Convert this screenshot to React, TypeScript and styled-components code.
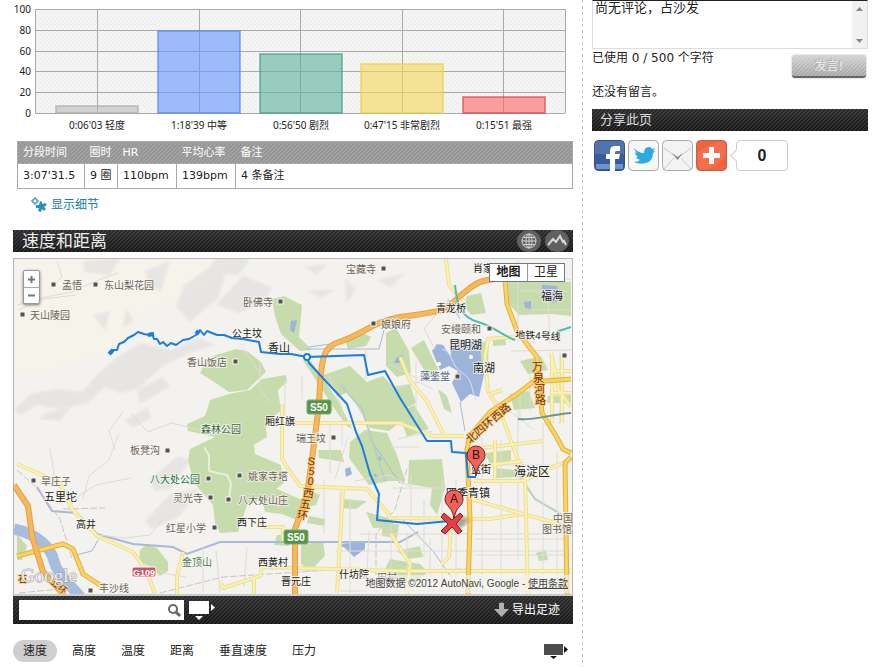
import React from "react";
import styled, { createGlobalStyle, css } from "styled-components";

const sans = `"Noto Sans", "Noto Sans CJK SC", sans-serif`;
const wide = `"DejaVu Sans", "Noto Sans CJK SC", sans-serif`;
const arial = `"Liberation Sans", "Noto Sans CJK SC", sans-serif`;

const stripes = (light: string) =>
  `linear-gradient(135deg, transparent 25%, ${light} 25% 50%, transparent 50% 75%, ${light} 75%) 0 0 / 4px 4px`;

const darkStripes = css`
  background: ${stripes("rgba(255, 255, 255, 0.09)")}, linear-gradient(#2c2c2c, #171717);
`;

const GlobalStyle = createGlobalStyle`
  * { box-sizing: border-box; }
  body { margin: 0; background: #fff; color: #333; font: 12px ${wide}; }
  button, input, textarea { font-family: inherit; }
`;

const Page = styled.div`
  display: grid;
  grid-template-columns: minmax(0, 1fr) 303px;
  min-height: 100vh;
`;
const Main = styled.main`
  padding: 0 10px 2px 13px;
  background: repeating-linear-gradient(#c8c8c8 0 3px, transparent 3px 6px) right / 1px 100% no-repeat;
`;
const Sidebar = styled.aside`
  padding: 0 18px 0 9px;
`;

const Chart = styled.svg`
  display: block;
  width: 100%;
  height: auto;
  font-family: ${sans};
  font-size: 10px;
  fill: #222;
`;

const SummaryTable = styled.table`
  width: calc(100% - 4px);
  margin: 5px 0 0 4px;
  border-collapse: collapse;
  border: 1px solid #a8a8a8;
  th {
    height: 22px;
    padding: 0 5px;
    text-align: left;
    font-size: 11px;
    font-weight: 400;
    line-height: 20px;
    color: #fff;
  }
  thead {
    background: ${stripes("rgba(255, 255, 255, 0.12)")}, #959595;
  }
  td {
    height: 25px;
    padding: 0 5px;
    border: 1px solid #a8a8a8;
    font-size: 11px;
    line-height: 16px;
    color: #222;
    white-space: nowrap;
  }
`;
const Col = styled.col<{ $width?: number }>`
  ${(p) => p.$width && `width: ${p.$width}px;`}
`;

const DetailLink = styled.a`
  display: flex;
  align-items: center;
  gap: 4px;
  width: max-content;
  margin: 7px 0 0 18px;
  height: 18px;
  line-height: 18px;
  color: #14809f;
  text-decoration: none;
`;

const PanelHeader = styled.header`
  ${darkStripes}
  display: flex;
  align-items: center;
  justify-content: space-between;
  height: 22px;
  margin-top: 16px;
  padding: 0 4px 0 9px;
`;
const PanelTitle = styled.h2`
  margin: 0;
  font-size: 17px;
  font-weight: 400;
  line-height: 20px;
  color: #eee;
`;
const RoundButtons = styled.div`
  display: flex;
  gap: 4px;
`;
const RoundButton = styled.button`
  display: grid;
  place-items: center;
  width: 24px;
  height: 22px;
  padding: 0;
  border: 0;
  border-radius: 50%;
  background: #606060;
`;

const MapFrame = styled.div`
  position: relative;
  margin-top: 6px;
  border: 1px solid #b5b5b5;
  border-bottom: 2px solid #ccc;
  overflow: hidden;
`;
const MapDrawing = styled.svg`
  display: block;
  width: 100%;
  height: auto;
  background: #f4f2ee;
  font-family: ${arial};
`;
const ZoomControl = styled.div`
  position: absolute;
  left: 9px;
  top: 11px;
  display: flex;
  flex-direction: column;
  width: 17px;
  border: 1px solid #999;
  border-radius: 2px;
  background: #fff;
  box-shadow: 0 1px 3px #777;
`;
const ZoomButton = styled.button`
  display: grid;
  place-items: center;
  height: 16px;
  padding: 0;
  border: 0;
  background: none;
  & + & { border-top: 1px solid #aaa; }
`;
const MapTypes = styled.div`
  position: absolute;
  right: 7px;
  top: 4px;
  display: flex;
  border: 1px solid #717b87;
  background: #fff;
`;
const MapType = styled.button<{ $active?: boolean }>`
  width: 37px;
  height: 17px;
  padding: 0;
  border: 0;
  background: none;
  font-size: 12px;
  line-height: 17px;
  color: #222;
  font-weight: ${(p) => (p.$active ? 700 : 400)};
  & + & { border-left: 1px solid #999; }
`;
const Attribution = styled.p`
  position: absolute;
  right: 0;
  bottom: 1px;
  margin: 0;
  padding: 0 4px;
  background: rgba(245, 243, 240, 0.65);
  font: 10px/18px ${arial};
  color: #444;
  a { color: #444; }
`;

const MapBar = styled.div`
  ${darkStripes}
  display: flex;
  align-items: center;
  height: 28px;
  padding: 0 13px 0 6px;
`;
const SearchBox = styled.label`
  display: flex;
  align-items: center;
  width: 165px;
  height: 20px;
  padding-right: 2px;
  background: #fff;
`;
const SearchInput = styled.input`
  flex: 1;
  min-width: 0;
  border: 0;
  outline: 0;
  padding: 0 4px;
  background: none;
  font-size: 12px;
`;
const IconButton = styled.button`
  display: block;
  padding: 0;
  border: 0;
  background: none;
  margin-left: 5px;
  svg { display: block; }
`;
const ExportButton = styled.button`
  display: flex;
  align-items: center;
  gap: 3px;
  margin-left: auto;
  padding: 0;
  border: 0;
  background: none;
  font-size: 12px;
  line-height: 20px;
  color: #fff;
`;

const Tabs = styled.nav`
  display: flex;
  align-items: center;
  gap: 5px;
  margin-top: 16px;
  padding-right: 5px;
`;
const Tab = styled.button<{ $active?: boolean }>`
  height: 22px;
  padding: 0 10px;
  border: 0;
  border-radius: 11px;
  background: ${(p) => (p.$active ? "#cfcfcf" : "none")};
  font-size: 12px;
  line-height: 22px;
  color: #222;
`;
const TabsEnd = styled.div`
  margin-left: auto;
`;

const CommentBox = styled.div`
  display: flex;
  height: 49px;
  border: 1px solid #ddd;
  border-top-color: #222;
`;
const CommentInput = styled.textarea`
  flex: 1;
  min-width: 0;
  padding: 0 2px;
  border: 0;
  outline: 0;
  resize: none;
  overflow: hidden;
  font-size: 13px;
  line-height: 14px;
  color: #222;
`;
const ScrollTrack = styled.div`
  display: flex;
  flex-direction: column;
  justify-content: space-between;
  align-items: center;
  width: 15px;
  padding: 6px 0 5px;
  background: #f1f1f1;
`;
const CommentActions = styled.div`
  display: flex;
  justify-content: space-between;
  padding-right: 2px;
`;
const Note = styled.p`
  margin: 0;
  font-size: 12px;
  line-height: 18px;
  color: #222;
`;
const SubmitButton = styled.button`
  width: 74px;
  height: 23px;
  margin-top: 6px;
  padding: 0;
  border: 0;
  border-bottom: 2px solid #666;
  border-radius: 3px;
  background: ${stripes("rgba(255, 255, 255, 0.18)")}, linear-gradient(#d2d2d2, #a4a4a4);
  box-shadow: 0 0 2px #aaa;
  font-size: 12px;
  line-height: 20px;
  color: #eee;
  text-shadow: -1px -1px #aaa;
`;
const EmptyNote = styled(Note)`
  margin-top: 5px;
`;
const ShareTitle = styled.h2`
  ${darkStripes}
  margin: 8px 0 0;
  padding-left: 8px;
  font-size: 13px;
  font-weight: 400;
  line-height: 22px;
  color: #ddd;
`;
const ShareRow = styled.div`
  display: flex;
  align-items: center;
  gap: 3px;
  margin: 9px 0 0 2px;
`;
const ShareLink = styled.a`
  width: 31px;
  height: 31px;
  svg { display: block; }
`;
const ShareCount = styled.output`
  position: relative;
  width: 52px;
  height: 31px;
  margin-left: 6px;
  border: 1px solid #ccc;
  border-radius: 4px;
  font: 700 16px/29px ${arial};
  text-align: center;
  color: #222;
  &::before {
    content: "";
    position: absolute;
    left: -5px;
    top: 10px;
    width: 8px;
    height: 8px;
    border: solid #ccc;
    border-width: 0 0 1px 1px;
    background: #fff;
    transform: rotate(45deg);
  }
`;

const bars = [
  { x: 97, top: 106, color: "#bdbdbd", edge: "#a8a8a8", label: "0:06'03 轻度" },
  { x: 199, top: 31, color: "#6495ff", edge: "#4f82ee", label: "1:18'39 中等" },
  { x: 301, top: 54, color: "#5ab39c", edge: "#3d9880", label: "0:56'50 剧烈" },
  { x: 402, top: 64, color: "#f6d956", edge: "#ebcd42", label: "0:47'15 非常剧烈" },
  { x: 504, top: 97, color: "#ff6464", edge: "#e33b40", label: "0:15'51 最强" },
];

function ZoneChart() {
  return (
    <Chart viewBox="13 0 560 136" role="img" aria-label="心率区间">
      <defs>
        <pattern id="hatch" width="4" height="4" patternUnits="userSpaceOnUse">
          <rect width="4" height="4" fill="#f5f5f5" />
          <path d="M-1 1L1-1M0 4L4 0M3 5L5 3" stroke="#ebebeb" />
        </pattern>
      </defs>
      <rect x="35" y="9" width="530" height="104" fill="url(#hatch)" />
      {[0, 20, 40, 60, 80, 100].map((v) => {
        const y = Math.round(113 - v * 1.04);
        return (
          <g key={v}>
            <path d={`M35 ${y + 0.5}H565`} stroke="#aaa" />
            <text x="31" y={y + 4} textAnchor="end">{v}</text>
          </g>
        );
      })}
      {[35, 97, 199, 300, 402, 503, 565].map((x) => (
        <path key={x} d={`M${x + 0.5} 9V113`} stroke="#aaa" />
      ))}
      {bars.map((b) => (
        <g key={b.label}>
          <rect x={b.x - 41} y={b.top} width="82" height={113 - b.top} fill={b.color} fillOpacity="0.6" stroke={b.edge} strokeOpacity="0.55" strokeWidth="2" />
          <text x={b.x} y="129" textAnchor="middle">{b.label}</text>
        </g>
      ))}
    </Chart>
  );
}

type Label = [string, number, number, number?, string?];
const brown = "#6c6259";
const labels: Label[] = [
  ["孟悟", 62, 290, 10, brown], ["东山梨花园", 104, 290, 10, brown], ["天山陵园", 30, 320, 10, brown],
  ["宝藏寺", 346, 274, 10, brown], ["卧佛寺", 243, 307, 10, brown], ["娘娘府", 381, 329, 10, brown],
  ["公主坟", 232, 338], ["香山", 268, 353, 11], ["香山饭店", 187, 367, 10, brown],
  ["森林公园", 201, 434, 10, "#36683b"], ["厢红旗", 265, 426], ["瑞王坟", 296, 443, 10, brown],
  ["板凳沟", 130, 455, 10, brown], ["旱庄子", 41, 486, 10, brown], ["五里坨", 44, 502, 11],
  ["八大处公园", 150, 484, 10, "#26724b"], ["灵光寺", 173, 503, 10, brown], ["姚家寺塔", 248, 481, 10, brown],
  ["八大处山庄", 238, 505, 10, brown], ["西下庄", 237, 527], ["高井", 76, 529], ["红星小学", 166, 533, 10, brown],
  ["金顶山", 182, 567, 10, "#4a7b53"], ["西黄村", 258, 567], ["晋元庄", 281, 586], ["什坊院", 339, 579],
  ["田村", 377, 582, 10, brown], ["丰沙线", 99, 593, 10, brown], ["肖家河", 473, 273], ["福海", 541, 301, 11],
  ["青龙桥", 436, 313], ["安缦颐和", 441, 334, 10, brown], ["昆明湖", 449, 350, 11], ["南湖", 473, 373, 11],
  ["藻鉴堂", 420, 381, 10, "#526587"], ["海淀区", 514, 477, 12], ["四季青镇", 446, 498, 11],
  ["蓝街", 471, 474], ["中国", 553, 523, 10, brown], ["图书馆", 542, 534, 10, brown],
];
const dots = [[54, 286], [96, 286], [23, 316], [384, 270], [281, 303], [374, 325], [236, 363], [334, 439], [168, 452], [34, 482], [209, 480], [240, 477], [211, 499], [229, 501], [215, 529], [490, 330], [565, 357], [458, 378], [91, 592]];

const forests = [
  "M236 350L247 352L261 363L266 373L247 391L229 393L208 379L200 374L204 366L213 357Z",
  "M210 401L229 395L250 391L262 380L286 376L287 383L278 391L281 412L265 423L267 438L254 446L255 455L281 466L284 484L263 500L247 506L238 533L220 534L215 524L213 506L194 484L188 461L190 450L215 438L188 432L187 425L205 417Z",
  "M252 493L277 490L302 501L304 516L297 521L282 515L265 513L263 505Z",
  "M272 300L284 297L302 306L299 338L312 351L300 352L281 335L275 317Z",
  "M140 551L147 545L157 549L168 563L168 572L160 577L149 567L139 563Z M17 535L27 547L22 561L17 561Z",
  "M303 361L311 362L339 403L352 430L346 426L334 409Z",
  "M345 340L358 331L371 338L366 347L348 350Z M386 334L396 329L409 352L411 374L397 378L386 367Z",
  "M323 376L350 367L367 383L383 377L403 399L407 418L389 432L370 429L349 393L339 397Z",
  "M391 388L410 385L416 404L405 410L393 404Z M399 414L414 406L429 430L407 438Z",
  "M411 349L424 341L438 370L434 380L424 371Z M438 390L447 397L452 414L444 410Z",
  "M467 297L481 294L486 314L471 316L464 307Z M508 283L571 283L571 317L551 315L519 316L509 305Z",
  "M510 395L529 392L535 409L514 411Z M548 397L571 396L571 404L547 404Z M478 345L489 341L488 365L479 368Z",
  "M409 461L442 460L445 489L437 516L430 506L432 489L408 485Z",
  "M350 443L365 431L387 434L397 456L405 482L389 482L369 486L349 459Z M318 451L341 451L344 463L319 459Z",
  "M303 487L320 496L316 506L304 509Z M301 546L323 542L325 557L309 573L301 564Z",
  "M309 517L325 520L325 527L307 524Z M316 403L330 400L333 411L319 414Z",
  "M385 570L390 560L420 565L428 573L415 583L389 577Z M397 552L420 547L423 558L407 560Z",
  "M485 454L511 451L511 463L491 467Z M493 469L515 471L519 478L495 479Z M536 554L546 551L548 561L539 562Z",
  "M520 362L541 357L548 371L528 375Z M493 338L505 337L506 346L493 347Z M366 513L392 520L394 528L373 529Z",
  "M277 536L291 536L289 547L274 546Z M341 500L367 502L356 510L340 509Z M382 526L399 525L397 539L382 537Z",
];
const minorRoads = [
  "M57 262L62 278L50 290M17 306L45 298L72 293L96 282L118 274M18 311L43 300L76 296M50 450L56 486L74 500L96 486L131 479M83 500L89 477L109 461L119 434M115 451L109 432L123 413M131 415L148 433L172 424L199 431",
  "M163 520L150 536L125 539L98 536M203 548V594M216 552L220 594M247 548L244 588M161 574L186 578M242 348L260 374M260 363V389L270 404",
  "M285 380V420M302 376V400M329 376L342 409V447M330 424V474M348 438L335 480M366 350V380M391 366L418 380M355 482L390 476L411 488M324 480V535M340 494V570M350 500V594M369 532L366 594M391 520V592M407 534V572M430 539V592M336 552H570M341 592H570M360 535H570",
  "M393 390L419 383L433 390M416 363V431M398 440L432 432M390 448H419M392 489H450M411 475V526M424 501V559M442 480V594M456 481V594M482 439V594M501 441V594M543 424V582M557 454V594M475 466H568M474 540H566M475 556H571M485 580H571M518 409V562M511 352L571 351M520 394V421M530 371V413M490 397L533 430M551 355V427M560 352V425M511 275L531 269L571 281M518 261V343M548 298L550 345M522 292H571M531 311H571M448 301L424 330L435 350",
];
const majorRoads = [
  "M446 260L449 286L464 302M17 465L40 475L60 485L72 510L97 537L133 553L147 573L155 595M183 553L177 577V595",
  "M282 405V460L300 487L367 490L387 513L390 519L490 520L523 515L571 528M343 490L337 594M293 424H400L433 437H464",
  "M220 582L223 589L260 577L262 568L400 572H571M263 528H283V542M254 579V595",
  "M515 338L488 340L485 358L488 392L500 412L515 453L525 477L528 595M474 482H523L571 460M473 450L543 442M471 500L523 515",
  "M400 358L410 382L427 402L444 436M551 354L559 392L571 408M488 396L502 391M551 372H571M551 394H571M562 356V424M552 355V424",
  "M479 467L523 462M495 441V480M451 525L449 558L442 565M391 535L410 565L407 595",
];
const ringRoads = "M571 380L533 383L517 395L490 413L470 437L467 450L470 520L468 596M505 280L507 305L517 332L537 358L542 414L556 437L563 450L571 454M571 458L565 464L567 596M17 557L63 545L73 550L83 575L103 588";
const highways = "M510 279C475 280 475 286 461 296C443 314 443 312 400 318C368 325 367 333 342 342C322 348 321 358 319 405L315 437L307 497L295 530V595M14 486L28 507L32 537L43 573L64 596";

const vertical = [["S", 311, 466], ["5", 311, 476], ["0", 310, 486], ["西", 308, 498], ["五", 305, 509], ["环", 302, 520]] as const;

function Shield({ x, y, text, red }: { x: number; y: number; text: string; red?: boolean }) {
  return (
    <g>
      <rect x={x} y={y} width="24" height={red ? 10 : 14} rx="2" fill={red ? "#cc5369" : "#56944b"} stroke={red ? "#fff" : "#78ac69"} />
      <text x={x + 12} y={y + (red ? 9 : 11)} textAnchor="middle" fontSize={red ? 9 : 10} fontWeight="700" fill="#fff">{text}</text>
    </g>
  );
}

function Pin({ x, y, letter }: { x: number; y: number; letter: string }) {
  return (
    <g>
      <path d={`M${x} ${y}C${x - 1} ${y - 14} ${x - 9} ${y - 13} ${x - 9} ${y - 21}A9 9 0 0 1 ${x + 9} ${y - 21}C${x + 9} ${y - 13} ${x + 1} ${y - 14} ${x} ${y}Z`} fill="#f36159" stroke="#6b2521" />
      <text x={x} y={y - 17} textAnchor="middle" fontSize="12" fill="#26110f">{letter}</text>
    </g>
  );
}

function TrackMap() {
  return (
    <MapDrawing viewBox="14 260 558 335" role="img" aria-label="路线地图">
      <defs>
        <filter id="soft"><feGaussianBlur stdDeviation="2" /></filter>
        <filter id="slight"><feGaussianBlur stdDeviation="1" /></filter>
      </defs>
      <path d="M14 259H230L205 285L150 310L110 350L70 365L14 380Z" fill="#f6f3ea" filter="url(#soft)" />
      <g fill="#dededd" opacity=".6" filter="url(#slight)">
        <path d="M14 410L32 394L58 390L82 393L97 376L117 358L141 344L171 351L199 339L215 346L190 354L164 366L138 390L120 394L105 388L88 404L59 410L37 406L20 417Z" />
        <path d="M83 262L121 259L110 276L84 273ZM145 272L170 262L161 292L149 286ZM184 286L211 267L220 250L250 261L238 277L226 274L218 299L190 323L176 308ZM243 276L272 289L263 304L239 314L216 306Z" />
        <path d="M137 391L163 378L170 388L140 405ZM48 413L71 408L60 422L38 420ZM126 309L134 322L123 329ZM93 316L110 312L105 332Z" />
        <path d="M304 268L328 265L317 276ZM345 279L356 291L346 305ZM307 292L336 290L321 299ZM377 281L405 274L390 289ZM125 421L148 408L151 419L133 429ZM150 480L178 457L190 461L171 490L155 492ZM145 522L171 494L199 490L179 518L151 530Z" />
      </g>
      <g fill="#c7dcad">{forests.map((d) => <path key={d} d={d} />)}</g>
      <path d="M204 448L209 456L209 472L227 476L231 484L229 499" fill="none" stroke="#e8efd9" strokeWidth="2" />
      <g fill="#9db3da">
        <path d="M432 352L437 345L443 346L451 358L450 344L458 340L480 341L481 360L484 376L479 398L470 395L461 403L452 384L458 372L449 367L440 371Z" />
        <path d="M542 286L557 287L563 300L553 304L541 300ZM524 303L531 302L531 310L525 309ZM291 322L297 321L294 334L290 331ZM338 545L365 543L365 550L354 558L345 549ZM345 470L350 468L352 475L346 478ZM376 460L380 457L382 462ZM374 474L379 478L375 480ZM397 358L403 356L401 364L394 364Z" />
      </g>
      <g fill="#fff"><circle cx="439" cy="365" r="2" /><circle cx="471" cy="358" r="2" /></g>
      <path d="M442 350C454 353 450 366 461 373S470 384 476 402" fill="none" stroke="#d9e2ef" />
      <path d="M14 530C38 535 51 549 54 562S67 582 82 600" fill="none" stroke="#a6bde0" strokeWidth="11" />
      <g fill="none" stroke="#a9b8d6">
        <path d="M37 488L52 512L77 514L97 535L133 545L173 548L187 555L220 543H400L418 533" strokeWidth="2" />
        <path d="M98 541L92 552L76 556M309 348L330 345L353 335M307 350H379L384 331M370 440L400 484M448 300L460 320M460 403L465 432" />
        <path d="M402 520L433 552L454 582" />
        <path d="M519 476L535 500L571 521M340 385L362 410L385 482" stroke="#b6cec4" strokeWidth="2" />
      </g>
      <g fill="none" stroke="#dfdcd7" strokeWidth="1">{minorRoads.map((d) => <path key={d} d={d} />)}</g>
      <path d="M17 471L34 486L60 520L72 560M19 594L60 590M63 510L105 509M160 594L223 578L330 571L400 571L472 570M407 470L395 510L376 535V594" fill="none" stroke="#c8c6c4" strokeWidth="1" strokeDasharray="7 2" />
      {majorRoads.map((d) => (
        <g key={d} fill="none">
          <path d={d} stroke="#ebdf9f" strokeWidth="4" />
          <path d={d} stroke="#fcf2a8" strokeWidth="2" />
        </g>
      ))}
      <g fill="none" strokeLinejoin="round">
        <path d={ringRoads} stroke="#dfb04a" strokeWidth="5" />
        <path d={ringRoads} stroke="#fbd45c" strokeWidth="3" />
        <path d={highways} stroke="#dda34a" strokeWidth="6" />
        <path d={highways} stroke="#f9b759" strokeWidth="4" />
        <path d="M455 286C457 307 461 318 478 323C491 326 500 335 515 341M556 333L571 328" stroke="#4fbcae" strokeWidth="2" />
        <path d="M518 420C535 422 545 416 571 414" stroke="#66998f" strokeWidth="2" />
      </g>
      <g fill="#555150">{dots.map(([x, y]) => <rect key={`${x}-${y}`} x={x - 3} y={y - 3} width="5" height="5" stroke="#f5f4f0" />)}</g>
      <g stroke="#f7f6f1" strokeOpacity=".8" strokeWidth="2" paintOrder="stroke" strokeLinejoin="round">
        {labels.map(([text, x, y, size = 10, fill = "#202020"]) => (
          <text key={text} x={x} y={y} fontSize={size} fill={fill}>{text}</text>
        ))}
        <text x="515" y="339" fontSize="10" transform="rotate(3 515 339)" fill="#222">地铁4号线</text>
        <g stroke="#ffc76b" fill="#68340d" fontSize="11">
          {vertical.map(([c, x, y]) => <text key={c} x={x} y={y} textAnchor="middle" transform={`rotate(8 ${x} ${y})`}>{c}</text>)}
          {["万", "泉", "河", "路"].map((c, i) => <text key={c} x={532 + i} y={380 + i * 11} transform={`translate(0 -8)`}>{c}</text>)}
          <text x="470" y="445" transform="rotate(-41 470 445)">北四环西路</text>
          <text x="18" y="583" fontSize="9">石</text>
          <text x="50" y="584" fontSize="9" transform="rotate(40 50 584)">五环</text>
        </g>
      </g>
      <Shield x={307} y={401} text="S50" />
      <Shield x={284} y={531} text="S50" />
      <Shield x={132} y={568} text="G109" red />
      <text x="21" y="583" fontFamily="Liberation Serif, serif" fontSize="19" fill="#eee" stroke="#9a9a9a" strokeWidth="1" paintOrder="stroke">Google</text>
      <g fill="none" stroke="#1b7ddd" strokeWidth="2" strokeLinejoin="round">
        <path d="M111 355L113 351L117 351L119 345L124 343L128 339L134 336L138 333L144 335L149 336L152 334L154 340L157 340L160 345L163 343L167 347L171 344L176 346L183 341L189 340L196 336L200 331L204 336L207 332L217 336L224 336L232 339L243 340L259 343L261 353L280 355L291 355L307 358L364 356L368 376L385 372L400 399L427 442H451L452 453L466 454L468 478H476" />
        <path d="M307 358L309 364L347 405L356 433L362 447L370 475L379 495L377 521L417 525L450 522" />
        <path d="M109 355L113 351M148 336L154 335M196 332L199 335" strokeWidth="4" />
        <circle cx="307" cy="358" r="3" fill="#fff" />
      </g>
      <ellipse cx="461" cy="524" rx="8" ry="4" fill="#555" opacity=".55" filter="url(#soft)" transform="rotate(-35 461 524)" />
      <Pin x={476} y={477} letter="B" />
      <Pin x={454} y={521} letter="A" />
      <path d="M444 514L452 521L460 514L463 517L456 525L462 532L458 535L452 528L445 535L441 532L448 525L441 518Z" fill="#e43f47" stroke="#7b2024" strokeLinejoin="round" />
    </MapDrawing>
  );
}

function NoteIcon({ fill }: { fill: string }) {
  const tip = fill === "#fff" ? "#fff" : "#111";
  return (
    <svg width="26" height="20" viewBox="0 0 26 20" aria-hidden="true">
      <path d="M0 1H20V14H0Z" fill={fill} />
      <path d="M22 4L26 7.500L22 11ZM6 16H14L10 20Z" fill={tip} />
    </svg>
  );
}

function ChartNoteIcon() {
  return (
    <svg width="24" height="16" viewBox="0 0 24 16" aria-hidden="true">
      <path d="M0 1H19V12H0Z" fill="#4c4c4c" />
      <path d="M20 3L24 6.500L20 10ZM6 13H13L9.500 16Z" fill="#111" />
    </svg>
  );
}

export default function App() {
  return (
    <>
      <GlobalStyle />
      <Page>
        <Main>
          <ZoneChart />
          <SummaryTable>
            <colgroup><Col $width={67} /><Col $width={33} /><Col $width={59} /><Col $width={59} /><Col /></colgroup>
            <thead><tr><th>分段时间</th><th>圈时</th><th>HR</th><th>平均心率</th><th>备注</th></tr></thead>
            <tbody><tr><td>3:07'31.5</td><td>9 圈</td><td>110bpm</td><td>139bpm</td><td>4 条备注</td></tr></tbody>
          </SummaryTable>
          <DetailLink href="#details">
            <svg width="16" height="16" viewBox="0 0 16 16" aria-hidden="true">
              <path d="M3 1H5V3H7V5H5V7H3V5H1V3H3Z" fill="#fff" stroke="#1687ad" />
              <path d="M9 4L11 5V7L14 6L16 8L13 10L15 12L13 14L11 12L10 15L7 14L8 11L5 11L5 8L8 8Z" fill="#2b8fc0" />
            </svg>
            显示细节
          </DetailLink>

          <PanelHeader>
            <PanelTitle>速度和距离</PanelTitle>
            <RoundButtons>
              <RoundButton aria-label="地图">
                <svg width="18" height="18" viewBox="0 0 18 18" fill="none" stroke="#d2d2d2" aria-hidden="true">
                  <circle cx="9" cy="9" r="7" /><ellipse cx="9" cy="9" rx="3" ry="7" /><path d="M2 9H16M3 5.500H15M3 12.500H15M9 2V16" />
                </svg>
              </RoundButton>
              <RoundButton aria-label="图表">
                <svg width="20" height="14" viewBox="0 0 20 14" fill="none" stroke="#d8d8d8" strokeWidth="2" aria-hidden="true">
                  <path d="M1 11L6 5L9 8L13 2L16 8L17 7L19 11" />
                </svg>
              </RoundButton>
            </RoundButtons>
          </PanelHeader>
          <MapFrame>
            <TrackMap />
            <ZoomControl>
              <ZoomButton aria-label="放大"><svg width="9" height="9" aria-hidden="true"><path d="M1 4.500H8M4.500 1V8" stroke="#777" strokeWidth="2" /></svg></ZoomButton>
              <ZoomButton aria-label="缩小"><svg width="9" height="9" aria-hidden="true"><path d="M1 4.500H8" stroke="#777" strokeWidth="2" /></svg></ZoomButton>
            </ZoomControl>
            <MapTypes><MapType $active>地图</MapType><MapType>卫星</MapType></MapTypes>
            <Attribution>地图数据 ©2012 AutoNavi, Google - <a href="#terms">使用条款</a></Attribution>
          </MapFrame>
          <MapBar>
            <SearchBox>
              <SearchInput type="text" aria-label="搜索" />
              <svg width="15" height="15" viewBox="0 0 15 15" fill="none" stroke="#666" strokeWidth="2" aria-hidden="true"><circle cx="6" cy="6" r="4" /><path d="M9 9L13 13" strokeWidth="3" /></svg>
            </SearchBox>
            <IconButton aria-label="显示备注"><NoteIcon fill="#fff" /></IconButton>
            <ExportButton>
              <svg width="15" height="16" viewBox="0 0 15 16" aria-hidden="true"><path d="M5 1Q7 0 10 1V7H15L7.500 15L0 7H5Z" fill="#b0b0b0" /></svg>
              导出足迹
            </ExportButton>
          </MapBar>
          <Tabs>
            {["速度", "高度", "温度", "距离", "垂直速度", "压力"].map((t, i) => <Tab key={t} $active={i === 0}>{t}</Tab>)}
            <TabsEnd><IconButton aria-label="图表备注"><ChartNoteIcon /></IconButton></TabsEnd>
          </Tabs>
        </Main>

        <Sidebar>
          <CommentBox>
            <CommentInput aria-label="评论" defaultValue="尚无评论，占沙发" />
            <ScrollTrack aria-hidden="true">
              <svg width="7" height="4"><path d="M0 4L3.500 0L7 4Z" fill="#888" /></svg>
              <svg width="7" height="4"><path d="M0 0L3.500 4L7 0Z" fill="#888" /></svg>
            </ScrollTrack>
          </CommentBox>
          <CommentActions>
            <Note>已使用 0 / 500 个字符</Note>
            <SubmitButton>发言!</SubmitButton>
          </CommentActions>
          <EmptyNote>还没有留言。</EmptyNote>
          <ShareTitle>分享此页</ShareTitle>
          <ShareRow>
            <ShareLink href="#facebook" aria-label="Facebook">
              <svg width="31" height="31" viewBox="0 0 31 31">
                <rect x=".5" y=".5" width="30" height="30" rx="4" fill="#395b9a" stroke="#344f80" />
                <path d="M1 4Q1 1 4 1H27Q30 1 30 4V14H1Z" fill="#5272ab" /><path d="M2 24H29V29H2Z" fill="#6b96cd" />
                <path d="M16 31V19H12V14H16V11Q16 6 21 6H26V11H22Q21 11 21 13V14H26L25 19H21V31Z" fill="#fff" />
              </svg>
            </ShareLink>
            <ShareLink href="#twitter" aria-label="Twitter">
              <svg width="31" height="31" viewBox="0 0 31 31">
                <rect x=".5" y=".5" width="30" height="30" rx="4" fill="#f7f7f7" stroke="#aaa" />
                <path d="M6 8Q10 13 16 13Q16 7 21 7Q23 7 24 9L27 8L25 11L27 11L25 13Q25 21 18 23Q12 25 6 22Q10 22 12 20Q9 19 8 17H10Q7 15 7 12L9 13Q6 10 6 8Z" fill="#2eaae1" />
              </svg>
            </ShareLink>
            <ShareLink href="#mail" aria-label="邮件">
              <svg width="31" height="31" viewBox="0 0 31 31">
                <rect x=".5" y=".5" width="30" height="30" rx="4" fill="#f3f3f3" stroke="#aaa" />
                <path d="M2 29L12 18M29 29L19 18" stroke="#ccc" /><path d="M2 8L15.500 18L29 8" fill="none" stroke="#ccc" /><path d="M10 13L15.500 20L21 13L15.500 17Z" fill="#888" />
              </svg>
            </ShareLink>
            <ShareLink href="#more" aria-label="更多">
              <svg width="31" height="31" viewBox="0 0 31 31">
                <rect x=".5" y=".5" width="30" height="30" rx="4" fill="#f1633f" stroke="#b9664e" />
                <path d="M2 12Q15 4 22 2H27L29 4V14Q24 25 12 29H5Q2 28 2 25Z" fill="#fa7855" opacity=".6" />
                <path d="M13 7H18V13H24V18H18V24H13V18H7V13H13Z" fill="#fff" />
              </svg>
            </ShareLink>
            <ShareCount>0</ShareCount>
          </ShareRow>
        </Sidebar>
      </Page>
    </>
  );
}
